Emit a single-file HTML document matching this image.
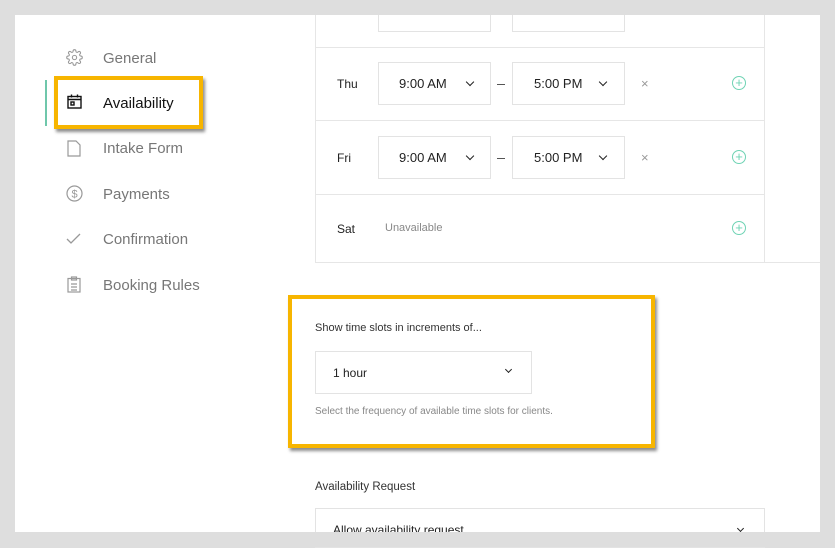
<!DOCTYPE html>
<html><head><style>
*{box-sizing:border-box;margin:0;padding:0}
body{width:835px;height:547px;background:#dedede;font-family:"Liberation Sans",sans-serif;position:relative;overflow:hidden}
.panel{position:absolute;left:15px;top:15px;width:805px;height:517px;background:#fff;overflow:hidden}
.a{position:absolute}
.nav{position:absolute;left:103px;font-size:15px;color:#777}
.ic{position:absolute;left:66px}
.sel{position:absolute;border:1px solid #e3e3e3;height:43px;font-size:13px;color:#222;display:flex;align-items:center}
.chev{position:absolute;width:6px;height:6px;border-right:1.6px solid #222;border-bottom:1.6px solid #222;transform:rotate(45deg)}
.hl{position:absolute;border:4px solid #f7b500;box-shadow:2px 3px 3px rgba(0,0,0,.45)}
.day{position:absolute;left:337px;font-size:12px;color:#222}
.hr{position:absolute;height:1px;background:#e6e6e6}
.plus{position:absolute;left:732px;width:14px;height:14px;border:1.3px solid #6fd3b4;border-radius:50%;color:#6fd3b4;font-size:13px;line-height:11px;text-align:center}
.x{position:absolute;left:641px;font-size:13px;color:#999}
.dash{position:absolute;left:497px;width:8px;height:1px;background:#555}
</style></head><body>
<div class="panel"></div>
<div class="a" style="left:45px;top:80px;width:2px;height:46px;background:#6fc7ab"></div>
<svg class="ic" style="top:49px" width="17" height="17" viewBox="0 0 24 24" fill="none" stroke="#999" stroke-width="1.5"><circle cx="12" cy="12" r="3"/><path d="M19.4 15a1.7 1.7 0 0 0 .3 1.8l.1.1a2 2 0 1 1-2.8 2.8l-.1-.1a1.7 1.7 0 0 0-2.9 1.2V21a2 2 0 1 1-4 0v-.1a1.7 1.7 0 0 0-2.9-1.2l-.1.1a2 2 0 1 1-2.8-2.8l.1-.1a1.7 1.7 0 0 0-1.2-2.9H3a2 2 0 1 1 0-4h.1a1.7 1.7 0 0 0 1.2-2.9l-.1-.1a2 2 0 1 1 2.8-2.8l.1.1a1.7 1.7 0 0 0 2.9-1.2V3a2 2 0 1 1 4 0v.1a1.7 1.7 0 0 0 2.9 1.2l.1-.1a2 2 0 1 1 2.8 2.8l-.1.1a1.7 1.7 0 0 0 1.2 2.9H21a2 2 0 1 1 0 4h-.1a1.7 1.7 0 0 0-1.5 1z"/></svg>
<div class="nav" style="top:50px">General</div>
<div class="hl" style="left:54px;top:76px;width:149px;height:53px"></div>
<svg class="ic" style="top:94px;left:67px" width="15" height="15" viewBox="0 0 15 15" fill="none" stroke="#111" stroke-width="1.4"><rect x="1" y="2.5" width="13" height="11.5"/><path d="M1 5.5h13M4.5 0.5v3M10.5 0.5v3"/><rect x="4" y="8" width="3" height="3"/></svg>
<div class="nav" style="top:95px;color:#111">Availability</div>
<svg class="ic" style="top:140px;left:67px" width="14" height="17" viewBox="0 0 14 17" fill="none" stroke="#999" stroke-width="1.2"><path d="M1 1h8l4 4v11H1z"/></svg>
<div class="nav" style="top:140px">Intake Form</div>
<svg class="ic" style="top:185px" width="17" height="17" viewBox="0 0 17 17" fill="none" stroke="#999" stroke-width="1.2"><circle cx="8.5" cy="8.5" r="7.5"/><text x="8.5" y="12.5" font-size="11" text-anchor="middle" fill="#999" stroke="none" font-family="Liberation Sans">$</text></svg>
<div class="nav" style="top:186px">Payments</div>
<svg class="ic" style="top:233px" width="15" height="12" viewBox="0 0 15 12" fill="none" stroke="#999" stroke-width="1.3"><path d="M1 6l4 4 9-9"/></svg>
<div class="nav" style="top:231px">Confirmation</div>
<svg class="ic" style="top:276px;left:67px" width="14" height="17" viewBox="0 0 14 17" fill="none" stroke="#999" stroke-width="1.2"><rect x="1" y="2.5" width="12" height="13.5"/><rect x="4.5" y="1" width="5" height="3"/><path d="M4 8h6M4 11h6M4 14h6"/></svg>
<div class="nav" style="top:277px">Booking Rules</div>
<div class="a" style="left:315px;top:15px;width:1px;height:248px;background:#e6e6e6"></div>
<div class="a" style="left:764px;top:15px;width:1px;height:248px;background:#e6e6e6"></div>
<div class="hr" style="left:315px;top:47px;width:450px"></div>
<div class="hr" style="left:315px;top:120px;width:450px"></div>
<div class="hr" style="left:315px;top:194px;width:450px"></div>
<div class="hr" style="left:315px;top:262px;width:505px"></div>
<div class="sel" style="left:378px;top:0;width:113px;height:32px;border-top:none"></div>
<div class="sel" style="left:512px;top:0;width:113px;height:32px;border-top:none"></div>

<div class="day" style="top:77px">Thu</div>
<div class="sel" style="left:378px;top:62px;width:113px"><span style="margin-left:20px">9:00 AM</span><i class="chev" style="left:88px;top:16px"></i></div>
<div class="dash" style="top:84px"></div>
<div class="sel" style="left:512px;top:62px;width:113px"><span style="margin-left:21px">5:00 PM</span><i class="chev" style="left:87px;top:16px"></i></div>
<div class="x" style="top:76px">×</div>
<div class="plus" style="top:76px">+</div>

<div class="day" style="top:151px">Fri</div>
<div class="sel" style="left:378px;top:136px;width:113px"><span style="margin-left:20px">9:00 AM</span><i class="chev" style="left:88px;top:16px"></i></div>
<div class="dash" style="top:158px"></div>
<div class="sel" style="left:512px;top:136px;width:113px"><span style="margin-left:21px">5:00 PM</span><i class="chev" style="left:87px;top:16px"></i></div>
<div class="x" style="top:150px">×</div>
<div class="plus" style="top:150px">+</div>

<div class="day" style="top:222px">Sat</div>
<div class="a" style="left:385px;top:222px;font-size:11px;color:#888">Unavailable</div>
<div class="plus" style="top:221px">+</div>

<div class="hl" style="left:288px;top:295px;width:367px;height:153px"></div>
<div class="a" style="left:315px;top:322px;font-size:11px;color:#333">Show time slots in increments of...</div>
<div class="sel" style="left:315px;top:351px;width:217px;height:43px;font-size:12px"><span style="margin-left:17px">1 hour</span><i class="chev" style="left:190px;top:15px;width:5px;height:5px;border-width:1.2px"></i></div>
<div class="a" style="left:315px;top:406px;font-size:10px;color:#888">Select the frequency of available time slots for clients.</div>

<div class="a" style="left:315px;top:481px;font-size:11.5px;color:#333">Availability Request</div>
<div class="sel" style="left:315px;top:508px;width:450px;height:40px;font-size:12px;align-items:flex-start"><span style="margin-left:17px;margin-top:14px">Allow availability request</span><i class="chev" style="left:422px;top:17px;width:5px;height:5px;border-width:1.2px"></i></div>
<div class="a" style="left:0;top:532px;width:835px;height:15px;background:#dedede"></div>
<div class="a" style="left:820px;top:0;width:15px;height:547px;background:#dedede"></div>
<div class="a" style="left:0;top:0;width:835px;height:15px;background:#dedede"></div>
</body></html>
